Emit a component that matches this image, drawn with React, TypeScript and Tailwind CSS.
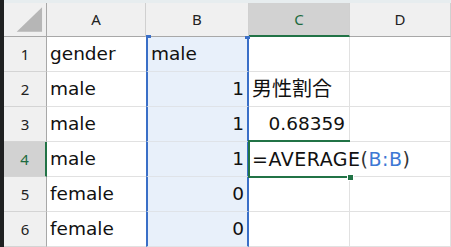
import React from 'react'

const font = { fontFamily: '"Noto Sans", "Noto Sans CJK JP", sans-serif' }
const cellFont = { fontFamily: '"DejaVu Sans", "Noto Sans CJK JP", sans-serif' }

const rows = [
  { n: 1, a: 'gender', b: 'male', c: '' },
  { n: 2, a: 'male', b: '1', c: '男性割合' },
  { n: 3, a: 'male', b: '1', c: '0.68359' },
  { n: 4, a: 'male', b: '1', c: '=AVERAGE' },
  { n: 5, a: 'female', b: '0', c: '' },
  { n: 6, a: 'female', b: '0', c: '' },
]

function Corner() {
  return (
    <div className="h-[34px] bg-[#f0f0f0] border-r border-b border-r-[#a8a8a8] border-b-[#a8a8a8] flex items-center justify-center">
      <svg width="43" height="34" viewBox="0 0 43 34">
        <polygon points="13,29 39,29 39,4" fill="#b6b6b6" />
      </svg>
    </div>
  )
}

function ColHead({ label, active }: { label: string; active?: boolean }) {
  return (
    <div
      className={`h-[34px] flex items-center justify-center text-[15px] border-r border-r-[#d0d0d0] ${
        active
          ? 'bg-[#d2d2d2] text-[#1d6b40] border-b-2 border-b-[#217346]'
          : 'bg-[#f0f0f0] text-[#222] border-b border-b-[#a8a8a8]'
      }`}
    >
      {label}
    </div>
  )
}

export default function App() {
  return (
    <div className="w-[451px] h-[247px] overflow-hidden flex bg-white" style={font}>
      {/* dark window edge */}
      <div className="w-[4px] h-full bg-[#1f2021] shrink-0" />

      <div className="flex-1 flex flex-col">
        <div className="h-[6px] bg-[#e7edef]" />

        <div className="grid grid-cols-[43px_99px_103px_101px_101px]">
          <Corner />
          <ColHead label="A" />
          <ColHead label="B" />
          <ColHead label="C" active />
          <ColHead label="D" />

          {rows.map((r) => (
            <React.Fragment key={r.n}>
              {/* row header */}
              <div
                className={`h-[35px] flex items-center justify-center text-[15px] border-b border-b-[#d4d4d4] ${
                  r.n === 4
                    ? 'bg-[#d2d2d2] text-[#1d6b40] border-r-2 border-r-[#217346]'
                    : 'bg-[#f0f0f0] text-[#222] border-r border-r-[#a8a8a8]'
                }`}
              >
                {r.n}
              </div>

              {/* A */}
              <div
                className="h-[35px] flex items-center pl-[3px] text-[18.5px] text-[#111] border-b border-b-[#e1e1e1]"
                style={cellFont}
              >
                {r.a}
              </div>

              {/* B (selected column) */}
              <div
                className={`relative h-[35px] flex items-center px-[3px] text-[18.5px] text-[#111] bg-[#e8f0fa] border-x-2 border-x-[#3a6fc7] border-b border-b-[#dfe3e8] ${
                  r.n === 1 ? 'justify-start' : 'justify-end'
                }`}
                style={cellFont}
              >
                {r.b}
                {r.n === 1 && (
                  <>
                    <span className="absolute -top-[2px] -left-[2px] w-[5px] h-[3px] bg-[#3a6fc7]" />
                    <span className="absolute -top-[1px] -right-[3px] w-[5px] h-[3px] bg-[#3a6fc7]" />
                  </>
                )}
              </div>

              {/* C */}
              {r.n === 4 ? (
                <div
                  className="relative h-[35px] flex items-center pl-[3px] text-[19px] tracking-[0.5px] text-[#111] whitespace-nowrap overflow-visible z-10 border-b border-b-[#e1e1e1]"
                  style={cellFont}
                >
                  <span>
                    =AVERAGE<span className="text-[#333]">(</span>
                    <span className="text-[#3d78d4]">B:B</span>
                    <span className="text-[#333]">)</span>
                  </span>
                  <span className="absolute -top-[2px] -bottom-[2px] -left-px right-0 border-2 border-r-0 border-[#217346] pointer-events-none" />
                  <span className="absolute -bottom-[5px] -right-[4px] w-[7px] h-[7px] bg-[#217346] border border-white" />
                </div>
              ) : (
                <div
                  className={`h-[35px] flex items-center whitespace-nowrap border-r border-b border-[#e1e1e1] ${
                    r.n === 2 ? 'pl-[3px] text-[20px] text-[#111]' : 'justify-end pr-[4px] text-[18.5px] text-[#111]'
                  }`}
                  style={r.n === 2 ? font : cellFont}
                >
                  {r.c}
                </div>
              )}

              {/* D */}
              <div className="h-[35px] border-r border-b border-[#e1e1e1]" />
            </React.Fragment>
          ))}
        </div>
      </div>
    </div>
  )
}
